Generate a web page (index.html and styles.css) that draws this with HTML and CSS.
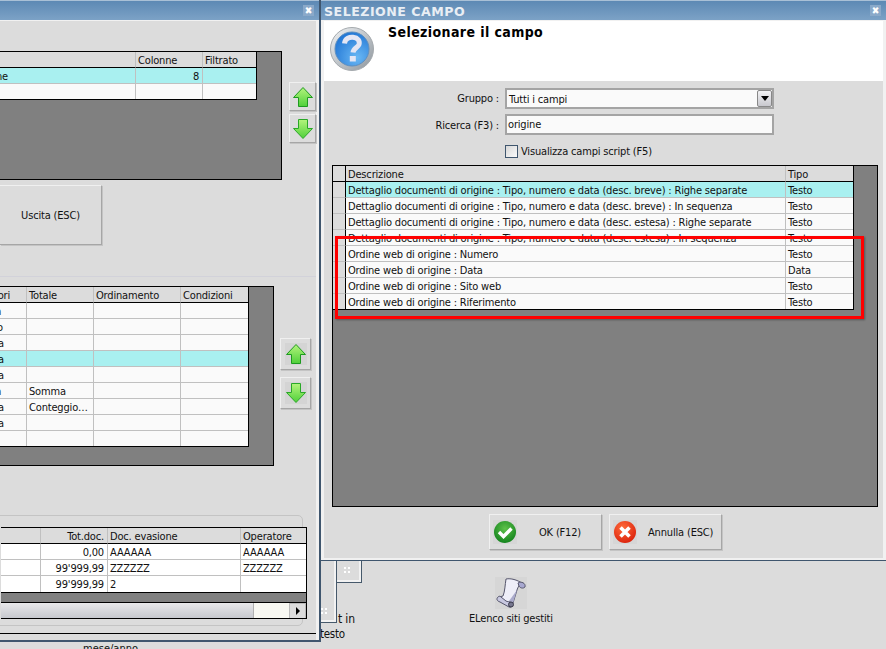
FILE: index.html
```html
<!DOCTYPE html>
<html lang="it">
<head>
<meta charset="utf-8">
<title>Selezione campo</title>
<link rel="stylesheet" href="styles.css">
</head>
<body>
<div class="desktop">
  <span class="label mese">mese/anno</span>
  <div class="tile tile-a"><span class="dots dots-a"></span></div>
  <div class="tile tile-b"><span class="dots dots-b"></span></div>
  <span class="label tin">t in</span>
  <span class="label testo">testo</span>
  <svg class="scroll-icon" viewBox="0 0 32 32" width="32" height="32" aria-hidden="true">
    <rect width="32" height="32" fill="#d6d6d6"/>
    <path d="M11 2 C16 1 22 3 27 6 C24 8 23 10 22 13 L18 26 C15 29 12 26 9 24 C7 23 5 22 4 20 L8 19 C10 14 10 8 11 2 Z" fill="#eeeef8" stroke="#55556b"/>
    <path d="M18 26 L22 13 L14 24 Z" fill="#aaaacc"/>
    <path d="M23 6 C26 4 31 6 30 10 C28 12 25 11 24 9 Z" fill="#a8a8d0" stroke="#55556b"/>
    <path d="M3 20 C1 22 2 24 5 25 L14 30 C17 31 18 28 17 26 C15 24 12 25 11 24 L6 20 C5 19 4 19 3 20 Z" fill="#c8c8e0" stroke="#55556b"/>
    <circle cx="16" cy="27.500" r="2.500" fill="#77778f" stroke="#3a3a4a"/>
  </svg>
  <span class="label elenco">ELenco siti gestiti</span>

  <section class="window win-left">
    <header class="titlebar">
      <span class="title-text"></span>
      <span class="close">✖</span>
    </header>
    <div class="client client-left">
      <div class="row row-top">
        <div class="panel panel-top">
          <table class="grid grid-top">
            <colgroup><col class="c136"><col class="c67"><col class="c53"></colgroup>
            <thead><tr><th></th><th>Colonne</th><th>Filtrato</th></tr></thead>
            <tbody>
              <tr class="sel"><td class="clip end-8">ne</td><td class="num">8</td><td></td></tr>
              <tr><td></td><td></td><td></td></tr>
            </tbody>
          </table>
        </div>
        <div class="arrows arrows-small">
          <button class="btn arrow-btn small" type="button"><svg viewBox="0 0 22 22" width="22" height="22" aria-hidden="true"><use href="#up"/></svg></button>
          <button class="btn arrow-btn small" type="button"><svg viewBox="0 0 22 22" width="22" height="22" aria-hidden="true"><use href="#down"/></svg></button>
        </div>
      </div>
      <button class="btn exit" type="button">Uscita (ESC)</button>
      <div class="hairline"></div>
      <div class="row row-mid">
        <div class="panel panel-mid">
          <table class="grid grid-mid">
            <colgroup><col class="c27"><col class="c67"><col class="c87"><col class="c67"></colgroup>
            <thead><tr><th class="clip end-10">ori</th><th>Totale</th><th>Ordinamento</th><th>Condizioni</th></tr></thead>
            <tbody>
              <tr><td class="clip end-1">n</td><td></td><td></td><td></td></tr>
              <tr><td class="clip end-3">o</td><td></td><td></td><td></td></tr>
              <tr><td class="clip end-4">a</td><td></td><td></td><td></td></tr>
              <tr class="sel"><td class="clip end-4">a</td><td></td><td></td><td></td></tr>
              <tr><td class="clip end-4">a</td><td></td><td></td><td></td></tr>
              <tr><td class="clip end-1">n</td><td>Somma</td><td></td><td></td></tr>
              <tr><td class="clip end-4">a</td><td>Conteggio…</td><td></td><td></td></tr>
              <tr><td class="clip end-4">a</td><td></td><td></td><td></td></tr>
              <tr><td></td><td></td><td></td><td></td></tr>
            </tbody>
          </table>
        </div>
        <div class="arrows arrows-big">
          <button class="btn arrow-btn big" type="button"><svg viewBox="0 0 22 22" width="22" height="22" aria-hidden="true"><use href="#up"/></svg></button>
          <button class="btn arrow-btn big" type="button"><svg viewBox="0 0 22 22" width="22" height="22" aria-hidden="true"><use href="#down"/></svg></button>
        </div>
      </div>
      <div class="fieldset">
        <div class="panel panel-bottom">
          <table class="grid grid-bottom">
            <colgroup><col class="c40"><col class="c67"><col class="c133"><col class="c66"></colgroup>
            <thead><tr><th></th><th class="num">Tot.doc.</th><th>Doc. evasione</th><th>Operatore</th></tr></thead>
            <tbody>
              <tr><td></td><td class="num">0,00</td><td>AAAAAA</td><td>AAAAAA</td></tr>
              <tr><td></td><td class="num">99'999,99</td><td>ZZZZZZ</td><td>ZZZZZZ</td></tr>
              <tr><td></td><td class="num">99'999,99</td><td>2</td><td></td></tr>
            </tbody>
          </table>
          <div class="scrollbar">
            <div class="thumb"></div>
            <div class="track"></div>
            <div class="scroll-btn"><svg viewBox="0 0 6 8" width="6" height="8" aria-hidden="true"><path d="M1 0 L5 4 L1 8 Z" fill="#000"/></svg></div>
          </div>
        </div>
      </div>
      <div class="blackline"></div>
    </div>
  </section>

  <section class="window win-right">
    <header class="titlebar">
      <span class="title-text">SELEZIONE CAMPO</span>
      <span class="close">✖</span>
    </header>
    <div class="client client-right">
      <div class="dialog-head">
        <svg class="q-icon" viewBox="0 0 44 44" width="44" height="44" aria-hidden="true">
          <defs>
            <linearGradient id="ring" x1="0" y1="0" x2="1" y2="1"><stop offset="0" stop-color="#f2f4f6"/><stop offset="1" stop-color="#8d959c"/></linearGradient>
            <radialGradient id="blue" cx="0.65" cy="0.75" r="0.8"><stop offset="0" stop-color="#6ab8f4"/><stop offset="1" stop-color="#1f74d4"/></radialGradient>
          </defs>
          <circle cx="22" cy="22" r="21.500" fill="url(#ring)" stroke="#a4a9ad"/>
          <circle cx="22" cy="22" r="17" fill="url(#blue)" stroke="#5e8fc0"/>
          <path d="M14.500 16.500 C15 11 20 10 23 10.300 C28 10.800 30 14 29 17.500 C28 20.500 23.500 21 23 25.500" fill="none" stroke="#e4e6f4" stroke-width="5"/>
          <rect x="19.800" y="29" width="6" height="5.500" fill="#e4e6f4"/>
        </svg>
        <h1 class="dialog-title">Selezionare il campo</h1>
      </div>
      <div class="form">
        <label class="form-label">Gruppo :</label>
        <div class="field select"><span class="select-value">Tutti i campi</span><span class="select-btn"><svg viewBox="0 0 8 5" width="8" height="5" aria-hidden="true"><path d="M0 0 H8 L4 5 Z" fill="#000"/></svg></span></div>
        <label class="form-label label-low">Ricerca (F3) :</label>
        <div class="field input">origine</div>
        <span></span>
        <div class="check-row"><span class="checkbox"></span><span>Visualizza campi script (F5)</span></div>
      </div>
      <div class="panel panel-fields">
        <table class="grid grid-fields">
          <colgroup><col class="c13"><col class="c440"><col class="c68"></colgroup>
          <thead><tr><th class="ind"></th><th>Descrizione</th><th>Tipo</th></tr></thead>
          <tbody>
            <tr class="sel"><td class="ind"></td><td>Dettaglio documenti di origine : Tipo, numero e data (desc. breve) : Righe separate</td><td>Testo</td></tr>
            <tr><td class="ind"></td><td>Dettaglio documenti di origine : Tipo, numero e data (desc. breve) : In sequenza</td><td>Testo</td></tr>
            <tr><td class="ind"></td><td>Dettaglio documenti di origine : Tipo, numero e data (desc. estesa) : Righe separate</td><td>Testo</td></tr>
            <tr><td class="ind"></td><td>Dettaglio documenti di origine : Tipo, numero e data (desc. estesa) : In sequenza</td><td>Testo</td></tr>
            <tr><td class="ind"></td><td>Ordine web di origine : Numero</td><td>Testo</td></tr>
            <tr><td class="ind"></td><td>Ordine web di origine : Data</td><td>Data</td></tr>
            <tr><td class="ind"></td><td>Ordine web di origine : Sito web</td><td>Testo</td></tr>
            <tr><td class="ind"></td><td>Ordine web di origine : Riferimento</td><td>Testo</td></tr>
          </tbody>
        </table>
      </div>
      <div class="actions">
        <button class="btn action" type="button">
          <svg viewBox="0 0 24 24" width="24" height="24" aria-hidden="true">
            <defs><radialGradient id="g" cx="0.5" cy="0.35" r="0.7"><stop offset="0" stop-color="#5ec24a"/><stop offset="1" stop-color="#0e7f1a"/></radialGradient></defs>
            <circle cx="12" cy="12" r="11" fill="url(#g)"/>
            <path d="M6 12 L10.500 16.500 L18.500 8.500" fill="none" stroke="#fff" stroke-width="3.400"/>
          </svg>
          <span class="action-text ok">OK (F12)</span>
        </button>
        <button class="btn action" type="button">
          <svg viewBox="0 0 24 24" width="24" height="24" aria-hidden="true">
            <defs><radialGradient id="r" cx="0.4" cy="0.3" r="0.8"><stop offset="0" stop-color="#ff6a3a"/><stop offset="1" stop-color="#d81c08"/></radialGradient></defs>
            <circle cx="12" cy="12" r="11" fill="url(#r)"/>
            <path d="M7.500 7.500 L16.500 16.500 M16.500 7.500 L7.500 16.500" fill="none" stroke="#fff" stroke-width="3.600"/>
          </svg>
          <span class="action-text">Annulla (ESC)</span>
        </button>
      </div>
    </div>
    <div class="annotation"></div>
  </section>
</div>
<svg class="defs" width="0" height="0" aria-hidden="true">
  <defs>
    <linearGradient id="arrowfill" x1="0" y1="0" x2="0" y2="1"><stop offset="0" stop-color="#b4f47c"/><stop offset="1" stop-color="#4fd03a"/></linearGradient>
    <symbol id="up" viewBox="0 0 22 22"><path d="M11 1.500 L20.500 11.500 H15.500 V20.500 H6.500 V11.500 H1.500 Z" fill="url(#arrowfill)" stroke="#1e9a20"/></symbol>
    <symbol id="down" viewBox="0 0 22 22"><path d="M11 20.500 L20.500 10.500 H15.500 V1.500 H6.500 V10.500 H1.500 Z" fill="url(#arrowfill)" stroke="#2aa828"/></symbol>
  </defs>
</svg>
</body>
</html>
```
FILE: styles.css
```css
* { box-sizing: border-box; }
html, body { margin: 0; padding: 0; height: 100%; overflow: hidden; }
body { font-family: "DejaVu Sans Condensed", "DejaVu Sans", sans-serif; font-size: 11px; letter-spacing: -0.17px; color: #111; background: #dcdcdc; }

.desktop { position: relative; width: 886px; height: 649px; overflow: hidden; background: #dcdcdc; }
.defs { position: absolute; }

.label { position: absolute; white-space: nowrap; line-height: 14px; }
.mese { left: 83px; top: 642px; letter-spacing: 0; }
.tin { left: 338px; top: 612px; font-size: 12px; }
.testo { left: 320px; top: 627px; font-size: 11.500px; letter-spacing: -0.3px; }
.elenco { left: 469px; top: 612px; }
.scroll-icon { position: absolute; left: 495px; top: 577px; }

.tile { position: absolute; background: #dcdcdc; border-right: 1px solid #46596b; border-bottom: 1px solid #46596b; box-shadow: inset -2px -2px 0 #f2f2f2; }
.tile-a { left: 300px; top: 540px; width: 37px; height: 83px; }
.tile-b { left: 337px; top: 540px; width: 25px; height: 43px; }
.dots { position: absolute; width: 2px; height: 2px; background: #fff; box-shadow: 4px 0 #fff, 4px 4px #fff, 0 4px #fff; }
.dots-a { left: 21px; top: 68px; }
.dots-b { left: 7px; top: 27px; }

.window { position: absolute; top: 0; display: flex; flex-direction: column; overflow: hidden; }
.win-left { left: 0; width: 321px; height: 642px; background: #f1f1f1; border-right: 2px solid #3f566e; border-bottom: 2px solid #3f566e; padding-right: 3px; }
.win-right { left: 321px; width: 565px; height: 561px; background: #f1f1f1; border-bottom: 1px solid #3f566e; padding: 0 3px 2px 3px; }

.titlebar { display: flex; align-items: center; justify-content: space-between; height: 21px; margin: 0 -3px 0 -3px; padding: 1px 5px 0 3px; flex: none; background: linear-gradient(#5d89b4, #7ca2c6); border-top: 1px solid #a9c0d6; border-bottom: 1px solid #f1f1f1; }
.title-text { margin-top: 1px; color: #e9eef4; font-family: "DejaVu Sans", sans-serif; font-weight: bold; font-size: 12.600px; letter-spacing: 0.5px; }
.close { display: flex; align-items: center; justify-content: center; width: 11px; height: 11px; margin-top: -2px; color: #fff; font-size: 10px; line-height: 11px; letter-spacing: 0; background: #8aa9c9; }

.client { flex: 1; background: #dcdcdc; display: flex; flex-direction: column; min-height: 0; }

.client-left { position: relative; }
.row { display: flex; }
.row-top { padding-top: 30px; }
.arrows { display: flex; flex-direction: column; }
.arrows-small { margin: 31px 0 0 7px; gap: 3px; }
.arrows-big { margin: 52px 0 0 6px; gap: 7px; }

.btn { display: flex; align-items: center; justify-content: center; padding: 0; font: inherit; letter-spacing: inherit; color: #111; background: #dcdcdc; border: 1px solid; border-color: #f0f0f0 #a6a6a6 #a6a6a6 #f0f0f0; box-shadow: 1px 1px 0 #c4c4c4; }
.arrow-btn.small { width: 27px; height: 29px; }
.arrow-btn.big { width: 31px; height: 32px; }
.arrow-btn.big svg { background: #d4d4d4; }

.exit { width: 102px; height: 60px; margin-top: 5px; border-left: 0; }
.hairline { height: 1px; margin-top: 31px; background: #d2d2da; }
.row-mid { margin-top: 9px; }

.panel { background: #808080; border: 1px solid #000; border-left: 0; overflow: hidden; }
.panel-top { width: 282px; height: 129px; }
.panel-mid { width: 274px; height: 180px; }
.panel-bottom { width: 306px; height: 92px; margin-top: 11px; }
.panel-fields { width: 546px; height: 342px; margin: 4px 0 0 8px; border-left: 1px solid #000; flex: none; }

.fieldset { width: 311px; height: 111px; margin-top: 49px; margin-left: -8px; padding-left: 8px; border: 1px solid #c4c4c4; border-radius: 5px; }
.blackline { height: 1px; background: #000; margin-top: 7px; }

.grid { border-collapse: separate; border-spacing: 0; table-layout: fixed; background: #fafafa; border-right: 1px solid #000; border-bottom: 1px solid #000; }
.grid-top { width: 257px; }
.grid-mid { width: 249px; }
.grid-bottom { width: 306px; background: #fff; border-right: 0; }
.grid-fields { width: 520px; }
.c13 { width: 13px; } .c27 { width: 27px; } .c40 { width: 40px; } .c53 { width: 53px; }
.c66 { width: 66px; } .c67 { width: 67px; } .c68 { width: 67px; } .c87 { width: 87px; }
.c133 { width: 133px; } .c136 { width: 136px; } .c440 { width: 440px; }

.grid th, .grid td { height: 16px; padding: 3px 3px 0 2px; font-size: 11px; font-weight: normal; line-height: 12px; text-align: left; vertical-align: top; white-space: nowrap; overflow: hidden; border-right: 1px solid #c0c0c0; border-bottom: 1px solid #c0c0c0; }
.grid th { background: #dcdcdc; border-bottom-color: #000; }
.grid th:last-child, .grid td:last-child { border-right: 0; }
.grid tbody tr:last-child td { border-bottom: 0; height: 15px; }
.grid-bottom tbody tr:last-child td { height: 16px; }
.grid .num { text-align: right; }
.grid .sel td, .sel td { background: #a9f0f0; }
.grid .ind { background: #dcdcdc; border-right-color: #000; }
.sel td.ind { background: #dcdcdc; }

.grid .clip { direction: rtl; text-align: right; padding-left: 0; }
.grid-top .end-8 { padding-right: 128px; }
.grid-mid .end-10 { padding-right: 17px; }
.grid-mid .end-4 { padding-right: 23px; }
.grid-mid .end-3 { padding-right: 24px; }
.grid-mid .end-1 { padding-right: 26px; }

.scrollbar { display: flex; height: 17px; margin-top: 9px; background: #f5f5f0; border-top: 1px solid #000; }
.thumb { width: 253px; background: linear-gradient(#e8e8ea, #c4c6cc); border-right: 1px solid #b0b0b0; }
.track { width: 35px; background: #f8f8f2; }
.scroll-btn { display: flex; align-items: center; justify-content: center; width: 17px; background: #dcdcdc; border: 1px solid #bbb; }

.dialog-head { display: flex; height: 60px; padding: 6px 0 0 6px; background: #fff; flex: none; }
.q-icon { flex: none; }
.dialog-title { margin: -3px 0 0 14px; font-size: 14px; font-weight: bold; line-height: 16px; letter-spacing: 0.4px; color: #000; }

.form { display: grid; grid-template-columns: 181px 269px; grid-auto-rows: 21px; row-gap: 5px; margin-top: 7px; align-items: center; }
.form-label { text-align: right; padding-right: 6px; }
.label-low { padding-top: 2px; }
.field { height: 21px; background: #fafafa; border: 2px solid #a4a4a4; display: flex; align-items: center; padding: 0 1px; justify-content: space-between; }
.select { padding-left: 2px; padding-right: 0; }
.select-value { margin-top: 2px; }
.select-btn { display: flex; align-items: center; justify-content: center; width: 15px; height: 17px; background: linear-gradient(#f2f2f4, #c8c8ce); border: 1px solid #888; border-radius: 2px; }
.check-row { display: flex; align-items: center; gap: 3px; margin-top: 2px; height: 21px; }
.checkbox { width: 13px; height: 13px; background: linear-gradient(135deg, #d8d8d8, #fafafa); border: 1px solid #3f566e; }

.actions { display: flex; gap: 7px; margin: 7px 0 0 165px; }
.action { width: 113px; height: 36px; justify-content: flex-start; padding-left: 3px; }
.action svg { flex: none; background: #d6d6d6; }
.action-text { margin-left: 11px; }
.action-text.ok { margin-left: 22px; }

.annotation { position: absolute; left: 14px; top: 236px; width: 529px; height: 83px; border: 3px solid #f00; box-shadow: 1px 1px 2px rgba(0,0,0,.35); }
```
